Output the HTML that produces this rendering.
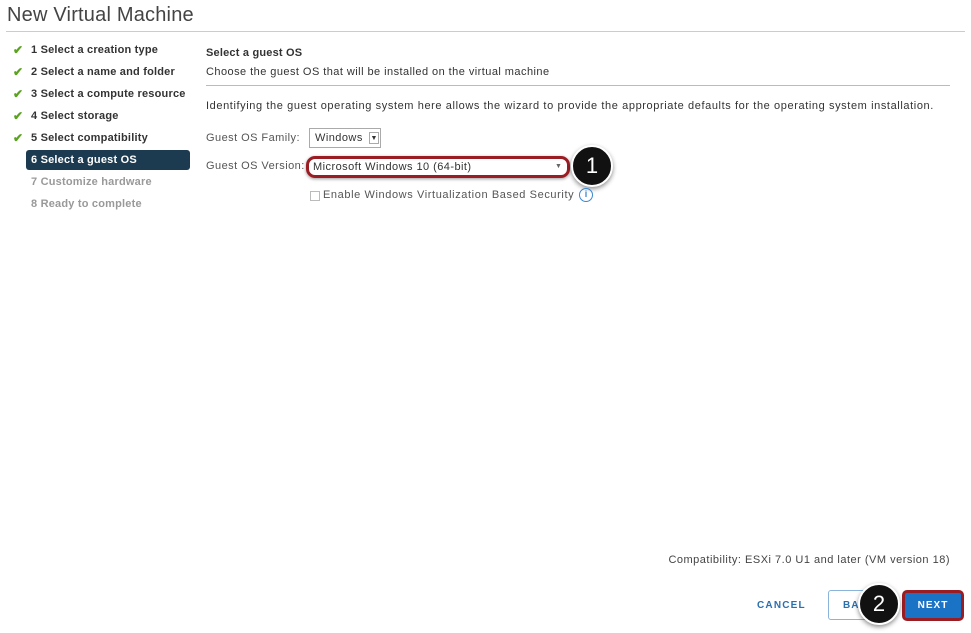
<!DOCTYPE html>
<html><head><meta charset="utf-8"><style>
*{margin:0;padding:0;box-sizing:border-box}
body{width:971px;height:633px;background:#fff;font-family:"Liberation Sans",sans-serif;color:#333;position:relative;overflow:hidden}
.a{position:absolute;white-space:nowrap}
.t{font-size:11px;letter-spacing:0.45px}
.nav{font-size:11px;font-weight:bold;color:#333;letter-spacing:0.2px}
.chk{color:#5aa220;font-size:12px;font-weight:bold}
.circ{position:absolute;border-radius:50%;background:#111;color:#fff;font-size:22px;text-align:center;box-shadow:0 2px 5px rgba(0,0,0,.45);border:2px solid #fff}
</style></head><body>
<div class="a" style="left:7px;top:4px;font-size:20px;color:#444;letter-spacing:0.2px">New Virtual Machine</div>
<div class="a" style="left:6px;top:31px;width:959px;height:1px;background:#ccc"></div>

<div class="a chk" style="left:13px;top:43px">✔</div><div class="a nav" style="left:31px;top:44px">1 Select a creation type</div>
<div class="a chk" style="left:13px;top:65px">✔</div><div class="a nav" style="left:31px;top:66px">2 Select a name and folder</div>
<div class="a chk" style="left:13px;top:87px">✔</div><div class="a nav" style="left:31px;top:88px">3 Select a compute resource</div>
<div class="a chk" style="left:13px;top:109px">✔</div><div class="a nav" style="left:31px;top:110px">4 Select storage</div>
<div class="a chk" style="left:13px;top:131px">✔</div><div class="a nav" style="left:31px;top:132px">5 Select compatibility</div>
<div class="a" style="left:26px;top:150px;width:164px;height:20px;background:#1d3b50;border-radius:3px"></div>
<div class="a nav" style="left:31px;top:154px;color:#fff">6 Select a guest OS</div>
<div class="a nav" style="left:31px;top:176px;color:#999">7 Customize hardware</div>
<div class="a nav" style="left:31px;top:198px;color:#999">8 Ready to complete</div>

<div class="a t" style="left:206px;top:47px;font-weight:bold;letter-spacing:0.2px">Select a guest OS</div>
<div class="a t" style="left:206px;top:66px">Choose the guest OS that will be installed on the virtual machine</div>
<div class="a" style="left:206px;top:85px;width:744px;height:1px;background:#bbb"></div>
<div class="a t" style="left:206px;top:100px;letter-spacing:0.6px">Identifying the guest operating system here allows the wizard to provide the appropriate defaults for the operating system installation.</div>
<div class="a t" style="left:206px;top:132px;color:#555">Guest OS Family:</div>
<div class="a t" style="left:309px;top:128px;width:72px;height:20px;border:1px solid #aaa;padding:3px 5px">Windows</div>
<div class="a" style="left:369px;top:132px;width:10px;height:12px;border:1px solid #aaa;font-size:7px;text-align:center;line-height:11px">▼</div>
<div class="a t" style="left:206px;top:160px;color:#555">Guest OS Version:</div>
<div class="a" style="left:306px;top:156px;width:264px;height:22px;border:3px solid #9b1d24;border-radius:9px;box-shadow:0 1px 3px rgba(0,0,0,.4)"></div>
<div class="a t" style="left:313px;top:161px">Microsoft Windows 10 (64-bit)</div>
<div class="a" style="left:555px;top:163px;font-size:7px;color:#666">▼</div>
<div class="circ" style="left:571px;top:145px;width:42px;height:42px;line-height:38px">1</div>
<div class="a" style="left:310px;top:191px;width:10px;height:10px;border:1px solid #bbb"></div>
<div class="a t" style="left:323px;top:189px;color:#555;letter-spacing:0.6px">Enable Windows Virtualization Based Security</div>
<div class="a" style="left:579px;top:188px;width:14px;height:14px;border:1.5px solid #3a88d0;border-radius:50%;color:#3a88d0;font-size:9px;text-align:center;line-height:11px;font-weight:bold">i</div>

<div class="a t" style="right:21px;top:554px;color:#444;letter-spacing:0.5px">Compatibility: ESXi 7.0 U1 and later (VM version 18)</div>
<div class="a" style="left:757px;top:600px;font-size:10px;font-weight:bold;color:#2c6fae;letter-spacing:1.2px">CANCEL</div>
<div class="a" style="left:828px;top:590px;width:64px;height:30px;border:1px solid #8ab4dc;border-radius:3px;font-size:10px;font-weight:bold;color:#2c6fae;padding:9px 0 0 14px;letter-spacing:1px">BACK</div>
<div class="a" style="left:902px;top:590px;width:62px;height:31px;background:#1b73c6;border:3px solid #9b1d24;border-radius:5px;color:#fff;font-size:10px;font-weight:bold;text-align:center;line-height:25px;letter-spacing:1px">NEXT</div>
<div class="circ" style="left:858px;top:583px;width:42px;height:42px;line-height:38px">2</div>
</body></html>
